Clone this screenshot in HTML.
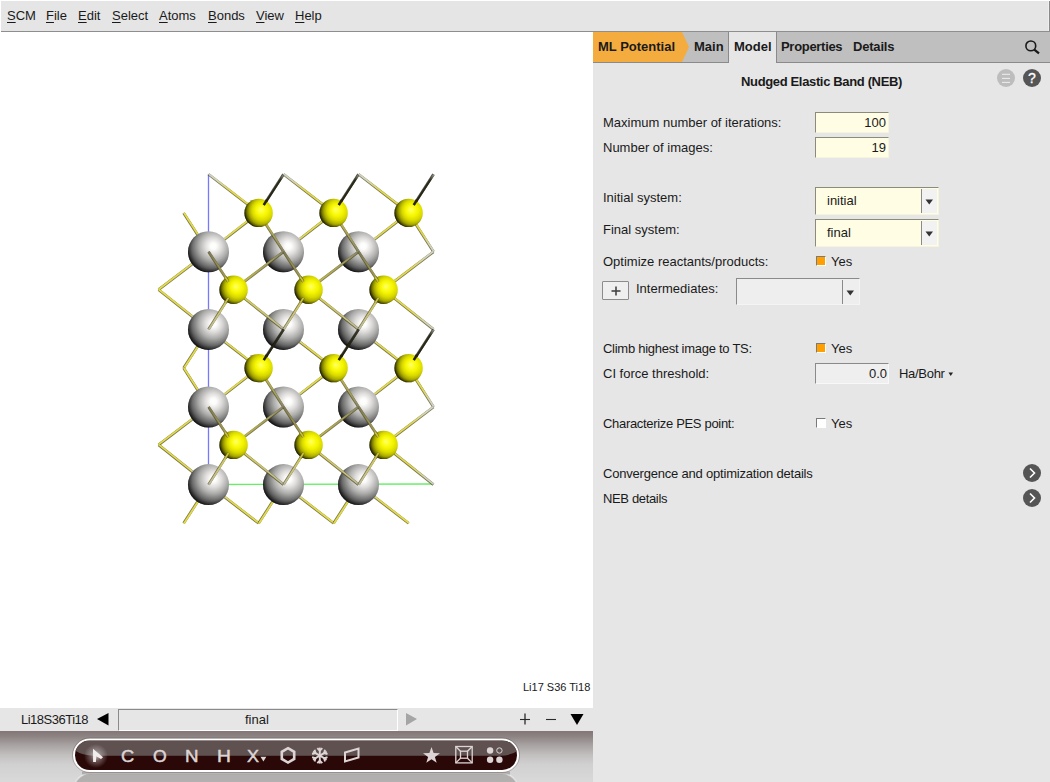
<!DOCTYPE html>
<html><head><meta charset="utf-8">
<style>
*{box-sizing:border-box}
html,body{margin:0;padding:0;width:1050px;height:782px;overflow:hidden;background:#fff;font-family:"Liberation Sans",sans-serif;color:#1a1a1a}
.a{position:absolute}
.t{position:absolute;font-size:13px;line-height:15px;white-space:nowrap}
.b{font-weight:bold}
.u{text-decoration:underline;text-underline-offset:2px}
#menu{left:1px;top:1px;width:1049px;height:31px;background:#e5e5e5;border-bottom:1px solid #8e8e8e;border-right:1px solid #8a8a8a;box-shadow:inset -1px 0 0 #efefef}
#view{left:0;top:32px;width:593px;height:676px;background:#fff}
#panel{left:593px;top:32px;width:457px;height:750px;background:#e6e6e6}
#tabbar{left:593px;top:32px;width:457px;height:31px;background:#bfbfbf;border-bottom:1px solid #8a8a8a}
.fld{position:absolute;background:#fffde4;border-top:1px solid #8b8b7a;border-left:1px solid #8b8b7a;border-right:1px solid #f6f4dc;border-bottom:1px solid #f6f4dc}
.cb{position:absolute;width:10px;height:10px;border-top:1px solid #7a7a7a;border-left:1px solid #7a7a7a;border-right:1px solid #fff;border-bottom:1px solid #fff}
</style></head><body>
<div id="menu" class="a"></div>
<div class="t" style="left:7px;top:8px"><span class="u">S</span>CM</div>
<div class="t" style="left:46px;top:8px"><span class="u">F</span>ile</div>
<div class="t" style="left:78px;top:8px"><span class="u">E</span>dit</div>
<div class="t" style="left:112px;top:8px"><span class="u">S</span>elect</div>
<div class="t" style="left:159px;top:8px"><span class="u">A</span>toms</div>
<div class="t" style="left:208px;top:8px"><span class="u">B</span>onds</div>
<div class="t" style="left:256px;top:8px"><span class="u">V</span>iew</div>
<div class="t" style="left:295px;top:8px"><span class="u">H</span>elp</div>

<div id="view" class="a"></div>
<!--MOL--><svg class="a" style="left:0;top:32px" width="593" height="676" viewBox="0 32 593 676">
<defs>
<radialGradient id="gti" cx="0.619" cy="0.364" r="0.657">
<stop offset="0" stop-color="#ffffff"/><stop offset="0.115" stop-color="#fcfcfa"/><stop offset="0.31" stop-color="#dedcda"/><stop offset="0.54" stop-color="#adadab"/><stop offset="0.77" stop-color="#707070"/><stop offset="0.95" stop-color="#383838"/><stop offset="1" stop-color="#2a2a2a"/>
</radialGradient>
<radialGradient id="gs" cx="0.7" cy="0.44" r="0.75" fx="0.57" fy="0.384">
<stop offset="0" stop-color="#ffff78"/><stop offset="0.12" stop-color="#ffff2c"/><stop offset="0.3" stop-color="#f4f400"/><stop offset="0.48" stop-color="#d8d800"/><stop offset="0.64" stop-color="#acac00"/><stop offset="0.8" stop-color="#6a6a00"/><stop offset="0.92" stop-color="#363600"/><stop offset="1" stop-color="#222200"/>
</radialGradient>
<radialGradient id="rim" cx="0.55" cy="0.45" r="0.57">
<stop offset="0" stop-color="#000" stop-opacity="0"/><stop offset="0.8" stop-color="#000" stop-opacity="0"/><stop offset="0.91" stop-color="#000" stop-opacity="0.18"/><stop offset="1" stop-color="#000" stop-opacity="0.6"/>
</radialGradient>
</defs>
<defs><linearGradient id="b1" gradientUnits="userSpaceOnUse" x1="258.6" y1="212.9" x2="208.5" y2="174.2"><stop offset="0" stop-color="#e4dc44"/><stop offset="0.55" stop-color="#e0d848"/><stop offset="0.85" stop-color="#d4d4bc"/><stop offset="1" stop-color="#d0d0c8"/></linearGradient><linearGradient id="b2" gradientUnits="userSpaceOnUse" x1="258.6" y1="212.9" x2="283.5" y2="174.2"><stop offset="0" stop-color="#24220e"/><stop offset="0.85" stop-color="#2a2a18"/><stop offset="1" stop-color="#9a9a90"/></linearGradient><linearGradient id="b3" gradientUnits="userSpaceOnUse" x1="258.6" y1="212.9" x2="208.5" y2="251.8"><stop offset="0" stop-color="#e4dc44"/><stop offset="0.55" stop-color="#e0d848"/><stop offset="0.85" stop-color="#d4d4bc"/><stop offset="1" stop-color="#d0d0c8"/></linearGradient><linearGradient id="b4" gradientUnits="userSpaceOnUse" x1="333.6" y1="212.9" x2="283.5" y2="174.2"><stop offset="0" stop-color="#e4dc44"/><stop offset="0.55" stop-color="#e0d848"/><stop offset="0.85" stop-color="#d4d4bc"/><stop offset="1" stop-color="#d0d0c8"/></linearGradient><linearGradient id="b5" gradientUnits="userSpaceOnUse" x1="333.6" y1="212.9" x2="358.5" y2="174.2"><stop offset="0" stop-color="#24220e"/><stop offset="0.85" stop-color="#2a2a18"/><stop offset="1" stop-color="#9a9a90"/></linearGradient><linearGradient id="b6" gradientUnits="userSpaceOnUse" x1="333.6" y1="212.9" x2="283.5" y2="251.8"><stop offset="0" stop-color="#e4dc44"/><stop offset="0.55" stop-color="#e0d848"/><stop offset="0.85" stop-color="#d4d4bc"/><stop offset="1" stop-color="#d0d0c8"/></linearGradient><linearGradient id="b7" gradientUnits="userSpaceOnUse" x1="408.6" y1="212.9" x2="358.5" y2="174.2"><stop offset="0" stop-color="#e4dc44"/><stop offset="0.55" stop-color="#e0d848"/><stop offset="0.85" stop-color="#d4d4bc"/><stop offset="1" stop-color="#d0d0c8"/></linearGradient><linearGradient id="b8" gradientUnits="userSpaceOnUse" x1="408.6" y1="212.9" x2="433.5" y2="174.2"><stop offset="0" stop-color="#24220e"/><stop offset="0.85" stop-color="#2a2a18"/><stop offset="1" stop-color="#9a9a90"/></linearGradient><linearGradient id="b9" gradientUnits="userSpaceOnUse" x1="408.6" y1="212.9" x2="358.5" y2="251.8"><stop offset="0" stop-color="#e4dc44"/><stop offset="0.55" stop-color="#e0d848"/><stop offset="0.85" stop-color="#d4d4bc"/><stop offset="1" stop-color="#d0d0c8"/></linearGradient><linearGradient id="b10" gradientUnits="userSpaceOnUse" x1="408.6" y1="212.9" x2="433.5" y2="251.8"><stop offset="0" stop-color="#e4dc44"/><stop offset="0.55" stop-color="#e0d848"/><stop offset="0.85" stop-color="#d4d4bc"/><stop offset="1" stop-color="#d0d0c8"/></linearGradient><linearGradient id="b11" gradientUnits="userSpaceOnUse" x1="383.6" y1="289.7" x2="433.5" y2="251.8"><stop offset="0" stop-color="#e4dc44"/><stop offset="0.55" stop-color="#e0d848"/><stop offset="0.85" stop-color="#d4d4bc"/><stop offset="1" stop-color="#d0d0c8"/></linearGradient><linearGradient id="b12" gradientUnits="userSpaceOnUse" x1="383.6" y1="289.7" x2="433.5" y2="329.4"><stop offset="0" stop-color="#e4dc44"/><stop offset="0.55" stop-color="#e0d848"/><stop offset="0.85" stop-color="#d4d4bc"/><stop offset="1" stop-color="#d0d0c8"/></linearGradient><linearGradient id="b13" gradientUnits="userSpaceOnUse" x1="258.6" y1="368.1" x2="208.5" y2="329.4"><stop offset="0" stop-color="#e4dc44"/><stop offset="0.55" stop-color="#e0d848"/><stop offset="0.85" stop-color="#d4d4bc"/><stop offset="1" stop-color="#d0d0c8"/></linearGradient><linearGradient id="b14" gradientUnits="userSpaceOnUse" x1="258.6" y1="368.1" x2="208.5" y2="407.0"><stop offset="0" stop-color="#e4dc44"/><stop offset="0.55" stop-color="#e0d848"/><stop offset="0.85" stop-color="#d4d4bc"/><stop offset="1" stop-color="#d0d0c8"/></linearGradient><linearGradient id="b15" gradientUnits="userSpaceOnUse" x1="333.6" y1="368.1" x2="283.5" y2="329.4"><stop offset="0" stop-color="#e4dc44"/><stop offset="0.55" stop-color="#e0d848"/><stop offset="0.85" stop-color="#d4d4bc"/><stop offset="1" stop-color="#d0d0c8"/></linearGradient><linearGradient id="b16" gradientUnits="userSpaceOnUse" x1="333.6" y1="368.1" x2="283.5" y2="407.0"><stop offset="0" stop-color="#e4dc44"/><stop offset="0.55" stop-color="#e0d848"/><stop offset="0.85" stop-color="#d4d4bc"/><stop offset="1" stop-color="#d0d0c8"/></linearGradient><linearGradient id="b17" gradientUnits="userSpaceOnUse" x1="408.6" y1="368.1" x2="358.5" y2="329.4"><stop offset="0" stop-color="#e4dc44"/><stop offset="0.55" stop-color="#e0d848"/><stop offset="0.85" stop-color="#d4d4bc"/><stop offset="1" stop-color="#d0d0c8"/></linearGradient><linearGradient id="b18" gradientUnits="userSpaceOnUse" x1="408.6" y1="368.1" x2="433.5" y2="329.4"><stop offset="0" stop-color="#24220e"/><stop offset="0.85" stop-color="#2a2a18"/><stop offset="1" stop-color="#9a9a90"/></linearGradient><linearGradient id="b19" gradientUnits="userSpaceOnUse" x1="408.6" y1="368.1" x2="358.5" y2="407.0"><stop offset="0" stop-color="#e4dc44"/><stop offset="0.55" stop-color="#e0d848"/><stop offset="0.85" stop-color="#d4d4bc"/><stop offset="1" stop-color="#d0d0c8"/></linearGradient><linearGradient id="b20" gradientUnits="userSpaceOnUse" x1="408.6" y1="368.1" x2="433.5" y2="407.0"><stop offset="0" stop-color="#e4dc44"/><stop offset="0.55" stop-color="#e0d848"/><stop offset="0.85" stop-color="#d4d4bc"/><stop offset="1" stop-color="#d0d0c8"/></linearGradient><linearGradient id="b21" gradientUnits="userSpaceOnUse" x1="383.6" y1="444.9" x2="433.5" y2="407.0"><stop offset="0" stop-color="#e4dc44"/><stop offset="0.55" stop-color="#e0d848"/><stop offset="0.85" stop-color="#d4d4bc"/><stop offset="1" stop-color="#d0d0c8"/></linearGradient><linearGradient id="b22" gradientUnits="userSpaceOnUse" x1="383.6" y1="444.9" x2="433.5" y2="484.6"><stop offset="0" stop-color="#e4dc44"/><stop offset="0.55" stop-color="#e0d848"/><stop offset="0.85" stop-color="#d4d4bc"/><stop offset="1" stop-color="#d0d0c8"/></linearGradient><linearGradient id="b23" gradientUnits="userSpaceOnUse" x1="183.6" y1="212.9" x2="208.5" y2="251.8"><stop offset="0" stop-color="#e4dc44"/><stop offset="0.55" stop-color="#e0d848"/><stop offset="0.85" stop-color="#d4d4bc"/><stop offset="1" stop-color="#d0d0c8"/></linearGradient><linearGradient id="b24" gradientUnits="userSpaceOnUse" x1="183.6" y1="368.1" x2="208.5" y2="329.4"><stop offset="0" stop-color="#e4dc44"/><stop offset="0.55" stop-color="#e0d848"/><stop offset="0.85" stop-color="#d4d4bc"/><stop offset="1" stop-color="#d0d0c8"/></linearGradient><linearGradient id="b25" gradientUnits="userSpaceOnUse" x1="183.6" y1="368.1" x2="208.5" y2="407.0"><stop offset="0" stop-color="#e4dc44"/><stop offset="0.55" stop-color="#e0d848"/><stop offset="0.85" stop-color="#d4d4bc"/><stop offset="1" stop-color="#d0d0c8"/></linearGradient><linearGradient id="b26" gradientUnits="userSpaceOnUse" x1="183.6" y1="523.3" x2="208.5" y2="484.6"><stop offset="0" stop-color="#e4dc44"/><stop offset="0.55" stop-color="#e0d848"/><stop offset="0.85" stop-color="#d4d4bc"/><stop offset="1" stop-color="#d0d0c8"/></linearGradient><linearGradient id="b27" gradientUnits="userSpaceOnUse" x1="258.6" y1="523.3" x2="208.5" y2="484.6"><stop offset="0" stop-color="#e4dc44"/><stop offset="0.55" stop-color="#e0d848"/><stop offset="0.85" stop-color="#d4d4bc"/><stop offset="1" stop-color="#d0d0c8"/></linearGradient><linearGradient id="b28" gradientUnits="userSpaceOnUse" x1="258.6" y1="523.3" x2="283.5" y2="484.6"><stop offset="0" stop-color="#e4dc44"/><stop offset="0.55" stop-color="#e0d848"/><stop offset="0.85" stop-color="#d4d4bc"/><stop offset="1" stop-color="#d0d0c8"/></linearGradient><linearGradient id="b29" gradientUnits="userSpaceOnUse" x1="333.6" y1="523.3" x2="283.5" y2="484.6"><stop offset="0" stop-color="#e4dc44"/><stop offset="0.55" stop-color="#e0d848"/><stop offset="0.85" stop-color="#d4d4bc"/><stop offset="1" stop-color="#d0d0c8"/></linearGradient><linearGradient id="b30" gradientUnits="userSpaceOnUse" x1="333.6" y1="523.3" x2="358.5" y2="484.6"><stop offset="0" stop-color="#e4dc44"/><stop offset="0.55" stop-color="#e0d848"/><stop offset="0.85" stop-color="#d4d4bc"/><stop offset="1" stop-color="#d0d0c8"/></linearGradient><linearGradient id="b31" gradientUnits="userSpaceOnUse" x1="408.6" y1="523.3" x2="358.5" y2="484.6"><stop offset="0" stop-color="#e4dc44"/><stop offset="0.55" stop-color="#e0d848"/><stop offset="0.85" stop-color="#d4d4bc"/><stop offset="1" stop-color="#d0d0c8"/></linearGradient><linearGradient id="b32" gradientUnits="userSpaceOnUse" x1="158.6" y1="289.7" x2="208.5" y2="251.8"><stop offset="0" stop-color="#e4dc44"/><stop offset="0.55" stop-color="#e0d848"/><stop offset="0.85" stop-color="#d4d4bc"/><stop offset="1" stop-color="#d0d0c8"/></linearGradient><linearGradient id="b33" gradientUnits="userSpaceOnUse" x1="158.6" y1="289.7" x2="208.5" y2="329.4"><stop offset="0" stop-color="#e4dc44"/><stop offset="0.55" stop-color="#e0d848"/><stop offset="0.85" stop-color="#d4d4bc"/><stop offset="1" stop-color="#d0d0c8"/></linearGradient><linearGradient id="b34" gradientUnits="userSpaceOnUse" x1="158.6" y1="444.9" x2="208.5" y2="407.0"><stop offset="0" stop-color="#e4dc44"/><stop offset="0.55" stop-color="#e0d848"/><stop offset="0.85" stop-color="#d4d4bc"/><stop offset="1" stop-color="#d0d0c8"/></linearGradient><linearGradient id="b35" gradientUnits="userSpaceOnUse" x1="158.6" y1="444.9" x2="208.5" y2="484.6"><stop offset="0" stop-color="#e4dc44"/><stop offset="0.55" stop-color="#e0d848"/><stop offset="0.85" stop-color="#d4d4bc"/><stop offset="1" stop-color="#d0d0c8"/></linearGradient><linearGradient id="b36" gradientUnits="userSpaceOnUse" x1="258.6" y1="212.9" x2="283.5" y2="251.8"><stop offset="0" stop-color="#c8c040"/><stop offset="0.4" stop-color="#b4ac50"/><stop offset="1" stop-color="#8a8870"/></linearGradient><linearGradient id="b37" gradientUnits="userSpaceOnUse" x1="233.6" y1="289.7" x2="208.5" y2="251.8"><stop offset="0" stop-color="#b4ac40"/><stop offset="0.4" stop-color="#a09850"/><stop offset="1" stop-color="#7c7a5c"/></linearGradient><linearGradient id="b38" gradientUnits="userSpaceOnUse" x1="233.6" y1="289.7" x2="283.5" y2="251.8"><stop offset="0" stop-color="#c8c040"/><stop offset="0.4" stop-color="#b4ac50"/><stop offset="1" stop-color="#8a8870"/></linearGradient><linearGradient id="b39" gradientUnits="userSpaceOnUse" x1="233.6" y1="289.7" x2="208.5" y2="329.4"><stop offset="0" stop-color="#dcd444"/><stop offset="0.4" stop-color="#d0c860"/><stop offset="1" stop-color="#bcbaa0"/></linearGradient><linearGradient id="b40" gradientUnits="userSpaceOnUse" x1="233.6" y1="289.7" x2="283.5" y2="329.4"><stop offset="0" stop-color="#dcd444"/><stop offset="0.4" stop-color="#d0c860"/><stop offset="1" stop-color="#bcbaa0"/></linearGradient><linearGradient id="b41" gradientUnits="userSpaceOnUse" x1="333.6" y1="212.9" x2="358.5" y2="251.8"><stop offset="0" stop-color="#c8c040"/><stop offset="0.4" stop-color="#b4ac50"/><stop offset="1" stop-color="#8a8870"/></linearGradient><linearGradient id="b42" gradientUnits="userSpaceOnUse" x1="308.6" y1="289.7" x2="283.5" y2="251.8"><stop offset="0" stop-color="#b4ac40"/><stop offset="0.4" stop-color="#a09850"/><stop offset="1" stop-color="#7c7a5c"/></linearGradient><linearGradient id="b43" gradientUnits="userSpaceOnUse" x1="308.6" y1="289.7" x2="358.5" y2="251.8"><stop offset="0" stop-color="#c8c040"/><stop offset="0.4" stop-color="#b4ac50"/><stop offset="1" stop-color="#8a8870"/></linearGradient><linearGradient id="b44" gradientUnits="userSpaceOnUse" x1="308.6" y1="289.7" x2="283.5" y2="329.4"><stop offset="0" stop-color="#dcd444"/><stop offset="0.4" stop-color="#d0c860"/><stop offset="1" stop-color="#bcbaa0"/></linearGradient><linearGradient id="b45" gradientUnits="userSpaceOnUse" x1="308.6" y1="289.7" x2="358.5" y2="329.4"><stop offset="0" stop-color="#dcd444"/><stop offset="0.4" stop-color="#d0c860"/><stop offset="1" stop-color="#bcbaa0"/></linearGradient><linearGradient id="b46" gradientUnits="userSpaceOnUse" x1="383.6" y1="289.7" x2="358.5" y2="251.8"><stop offset="0" stop-color="#b4ac40"/><stop offset="0.4" stop-color="#a09850"/><stop offset="1" stop-color="#7c7a5c"/></linearGradient><linearGradient id="b47" gradientUnits="userSpaceOnUse" x1="383.6" y1="289.7" x2="358.5" y2="329.4"><stop offset="0" stop-color="#dcd444"/><stop offset="0.4" stop-color="#d0c860"/><stop offset="1" stop-color="#bcbaa0"/></linearGradient><linearGradient id="b48" gradientUnits="userSpaceOnUse" x1="258.6" y1="368.1" x2="283.5" y2="329.4"><stop offset="0" stop-color="#24220e"/><stop offset="0.7" stop-color="#262412"/><stop offset="1" stop-color="#3a3a30"/></linearGradient><linearGradient id="b49" gradientUnits="userSpaceOnUse" x1="258.6" y1="368.1" x2="283.5" y2="407.0"><stop offset="0" stop-color="#c8c040"/><stop offset="0.4" stop-color="#b4ac50"/><stop offset="1" stop-color="#8a8870"/></linearGradient><linearGradient id="b50" gradientUnits="userSpaceOnUse" x1="233.6" y1="444.9" x2="208.5" y2="407.0"><stop offset="0" stop-color="#b4ac40"/><stop offset="0.4" stop-color="#a09850"/><stop offset="1" stop-color="#7c7a5c"/></linearGradient><linearGradient id="b51" gradientUnits="userSpaceOnUse" x1="233.6" y1="444.9" x2="283.5" y2="407.0"><stop offset="0" stop-color="#c8c040"/><stop offset="0.4" stop-color="#b4ac50"/><stop offset="1" stop-color="#8a8870"/></linearGradient><linearGradient id="b52" gradientUnits="userSpaceOnUse" x1="233.6" y1="444.9" x2="208.5" y2="484.6"><stop offset="0" stop-color="#dcd444"/><stop offset="0.4" stop-color="#d0c860"/><stop offset="1" stop-color="#bcbaa0"/></linearGradient><linearGradient id="b53" gradientUnits="userSpaceOnUse" x1="233.6" y1="444.9" x2="283.5" y2="484.6"><stop offset="0" stop-color="#dcd444"/><stop offset="0.4" stop-color="#d0c860"/><stop offset="1" stop-color="#bcbaa0"/></linearGradient><linearGradient id="b54" gradientUnits="userSpaceOnUse" x1="333.6" y1="368.1" x2="358.5" y2="329.4"><stop offset="0" stop-color="#24220e"/><stop offset="0.7" stop-color="#262412"/><stop offset="1" stop-color="#3a3a30"/></linearGradient><linearGradient id="b55" gradientUnits="userSpaceOnUse" x1="333.6" y1="368.1" x2="358.5" y2="407.0"><stop offset="0" stop-color="#c8c040"/><stop offset="0.4" stop-color="#b4ac50"/><stop offset="1" stop-color="#8a8870"/></linearGradient><linearGradient id="b56" gradientUnits="userSpaceOnUse" x1="308.6" y1="444.9" x2="283.5" y2="407.0"><stop offset="0" stop-color="#b4ac40"/><stop offset="0.4" stop-color="#a09850"/><stop offset="1" stop-color="#7c7a5c"/></linearGradient><linearGradient id="b57" gradientUnits="userSpaceOnUse" x1="308.6" y1="444.9" x2="358.5" y2="407.0"><stop offset="0" stop-color="#c8c040"/><stop offset="0.4" stop-color="#b4ac50"/><stop offset="1" stop-color="#8a8870"/></linearGradient><linearGradient id="b58" gradientUnits="userSpaceOnUse" x1="308.6" y1="444.9" x2="283.5" y2="484.6"><stop offset="0" stop-color="#dcd444"/><stop offset="0.4" stop-color="#d0c860"/><stop offset="1" stop-color="#bcbaa0"/></linearGradient><linearGradient id="b59" gradientUnits="userSpaceOnUse" x1="308.6" y1="444.9" x2="358.5" y2="484.6"><stop offset="0" stop-color="#dcd444"/><stop offset="0.4" stop-color="#d0c860"/><stop offset="1" stop-color="#bcbaa0"/></linearGradient><linearGradient id="b60" gradientUnits="userSpaceOnUse" x1="383.6" y1="444.9" x2="358.5" y2="407.0"><stop offset="0" stop-color="#b4ac40"/><stop offset="0.4" stop-color="#a09850"/><stop offset="1" stop-color="#7c7a5c"/></linearGradient><linearGradient id="b61" gradientUnits="userSpaceOnUse" x1="383.6" y1="444.9" x2="358.5" y2="484.6"><stop offset="0" stop-color="#dcd444"/><stop offset="0.4" stop-color="#d0c860"/><stop offset="1" stop-color="#bcbaa0"/></linearGradient></defs>
<line x1="208.5" y1="174" x2="208.5" y2="484" stroke="#7878ff" stroke-width="1.3"/>
<line x1="208.5" y1="484.5" x2="433.5" y2="484" stroke="#66ee66" stroke-width="1.3"/>
<line x1="258.6" y1="212.9" x2="208.5" y2="174.2" stroke="#4a4610" stroke-opacity="0.75" stroke-width="2.7"/><line x1="258.81" y1="212.62" x2="208.71" y2="173.92" stroke="url(#b1)" stroke-width="1.8"/>
<line x1="258.6" y1="212.9" x2="283.5" y2="174.2" stroke="#101008" stroke-opacity="0.75" stroke-width="2.7"/><line x1="258.89" y1="213.09" x2="283.79" y2="174.39" stroke="url(#b2)" stroke-width="1.8"/>
<line x1="258.6" y1="212.9" x2="208.5" y2="251.8" stroke="#4a4610" stroke-opacity="0.75" stroke-width="2.7"/><line x1="258.39" y1="212.62" x2="208.29" y2="251.52" stroke="url(#b3)" stroke-width="1.8"/>
<line x1="333.6" y1="212.9" x2="283.5" y2="174.2" stroke="#4a4610" stroke-opacity="0.75" stroke-width="2.7"/><line x1="333.81" y1="212.62" x2="283.71" y2="173.92" stroke="url(#b4)" stroke-width="1.8"/>
<line x1="333.6" y1="212.9" x2="358.5" y2="174.2" stroke="#101008" stroke-opacity="0.75" stroke-width="2.7"/><line x1="333.89" y1="213.09" x2="358.79" y2="174.39" stroke="url(#b5)" stroke-width="1.8"/>
<line x1="333.6" y1="212.9" x2="283.5" y2="251.8" stroke="#4a4610" stroke-opacity="0.75" stroke-width="2.7"/><line x1="333.39" y1="212.62" x2="283.29" y2="251.52" stroke="url(#b6)" stroke-width="1.8"/>
<line x1="408.6" y1="212.9" x2="358.5" y2="174.2" stroke="#4a4610" stroke-opacity="0.75" stroke-width="2.7"/><line x1="408.81" y1="212.62" x2="358.71" y2="173.92" stroke="url(#b7)" stroke-width="1.8"/>
<line x1="408.6" y1="212.9" x2="433.5" y2="174.2" stroke="#101008" stroke-opacity="0.75" stroke-width="2.7"/><line x1="408.89" y1="213.09" x2="433.79" y2="174.39" stroke="url(#b8)" stroke-width="1.8"/>
<line x1="408.6" y1="212.9" x2="358.5" y2="251.8" stroke="#4a4610" stroke-opacity="0.75" stroke-width="2.7"/><line x1="408.39" y1="212.62" x2="358.29" y2="251.52" stroke="url(#b9)" stroke-width="1.8"/>
<line x1="408.6" y1="212.9" x2="433.5" y2="251.8" stroke="#4a4610" stroke-opacity="0.75" stroke-width="2.7"/><line x1="408.89" y1="212.71" x2="433.79" y2="251.61" stroke="url(#b10)" stroke-width="1.8"/>
<line x1="383.6" y1="289.7" x2="433.5" y2="251.8" stroke="#4a4610" stroke-opacity="0.75" stroke-width="2.7"/><line x1="383.39" y1="289.42" x2="433.29" y2="251.52" stroke="url(#b11)" stroke-width="1.8"/>
<line x1="383.6" y1="289.7" x2="433.5" y2="329.4" stroke="#4a4610" stroke-opacity="0.75" stroke-width="2.7"/><line x1="383.82" y1="289.43" x2="433.72" y2="329.13" stroke="url(#b12)" stroke-width="1.8"/>
<line x1="258.6" y1="368.1" x2="208.5" y2="329.4" stroke="#4a4610" stroke-opacity="0.75" stroke-width="2.7"/><line x1="258.81" y1="367.82" x2="208.71" y2="329.12" stroke="url(#b13)" stroke-width="1.8"/>
<line x1="258.6" y1="368.1" x2="208.5" y2="407.0" stroke="#4a4610" stroke-opacity="0.75" stroke-width="2.7"/><line x1="258.39" y1="367.82" x2="208.29" y2="406.72" stroke="url(#b14)" stroke-width="1.8"/>
<line x1="333.6" y1="368.1" x2="283.5" y2="329.4" stroke="#4a4610" stroke-opacity="0.75" stroke-width="2.7"/><line x1="333.81" y1="367.82" x2="283.71" y2="329.12" stroke="url(#b15)" stroke-width="1.8"/>
<line x1="333.6" y1="368.1" x2="283.5" y2="407.0" stroke="#4a4610" stroke-opacity="0.75" stroke-width="2.7"/><line x1="333.39" y1="367.82" x2="283.29" y2="406.72" stroke="url(#b16)" stroke-width="1.8"/>
<line x1="408.6" y1="368.1" x2="358.5" y2="329.4" stroke="#4a4610" stroke-opacity="0.75" stroke-width="2.7"/><line x1="408.81" y1="367.82" x2="358.71" y2="329.12" stroke="url(#b17)" stroke-width="1.8"/>
<line x1="408.6" y1="368.1" x2="433.5" y2="329.4" stroke="#101008" stroke-opacity="0.75" stroke-width="2.7"/><line x1="408.89" y1="368.29" x2="433.79" y2="329.59" stroke="url(#b18)" stroke-width="1.8"/>
<line x1="408.6" y1="368.1" x2="358.5" y2="407.0" stroke="#4a4610" stroke-opacity="0.75" stroke-width="2.7"/><line x1="408.39" y1="367.82" x2="358.29" y2="406.72" stroke="url(#b19)" stroke-width="1.8"/>
<line x1="408.6" y1="368.1" x2="433.5" y2="407.0" stroke="#4a4610" stroke-opacity="0.75" stroke-width="2.7"/><line x1="408.89" y1="367.91" x2="433.79" y2="406.81" stroke="url(#b20)" stroke-width="1.8"/>
<line x1="383.6" y1="444.9" x2="433.5" y2="407.0" stroke="#4a4610" stroke-opacity="0.75" stroke-width="2.7"/><line x1="383.39" y1="444.62" x2="433.29" y2="406.72" stroke="url(#b21)" stroke-width="1.8"/>
<line x1="383.6" y1="444.9" x2="433.5" y2="484.6" stroke="#4a4610" stroke-opacity="0.75" stroke-width="2.7"/><line x1="383.82" y1="444.63" x2="433.72" y2="484.33" stroke="url(#b22)" stroke-width="1.8"/>
<line x1="183.6" y1="212.9" x2="208.5" y2="251.8" stroke="#4a4610" stroke-opacity="0.75" stroke-width="2.7"/><line x1="183.89" y1="212.71" x2="208.79" y2="251.61" stroke="url(#b23)" stroke-width="1.8"/>
<line x1="183.6" y1="368.1" x2="208.5" y2="329.4" stroke="#4a4610" stroke-opacity="0.75" stroke-width="2.7"/><line x1="183.89" y1="368.29" x2="208.79" y2="329.59" stroke="url(#b24)" stroke-width="1.8"/>
<line x1="183.6" y1="368.1" x2="208.5" y2="407.0" stroke="#4a4610" stroke-opacity="0.75" stroke-width="2.7"/><line x1="183.89" y1="367.91" x2="208.79" y2="406.81" stroke="url(#b25)" stroke-width="1.8"/>
<line x1="183.6" y1="523.3" x2="208.5" y2="484.6" stroke="#4a4610" stroke-opacity="0.75" stroke-width="2.7"/><line x1="183.89" y1="523.49" x2="208.79" y2="484.79" stroke="url(#b26)" stroke-width="1.8"/>
<line x1="258.6" y1="523.3" x2="208.5" y2="484.6" stroke="#4a4610" stroke-opacity="0.75" stroke-width="2.7"/><line x1="258.81" y1="523.02" x2="208.71" y2="484.32" stroke="url(#b27)" stroke-width="1.8"/>
<line x1="258.6" y1="523.3" x2="283.5" y2="484.6" stroke="#4a4610" stroke-opacity="0.75" stroke-width="2.7"/><line x1="258.89" y1="523.49" x2="283.79" y2="484.79" stroke="url(#b28)" stroke-width="1.8"/>
<line x1="333.6" y1="523.3" x2="283.5" y2="484.6" stroke="#4a4610" stroke-opacity="0.75" stroke-width="2.7"/><line x1="333.81" y1="523.02" x2="283.71" y2="484.32" stroke="url(#b29)" stroke-width="1.8"/>
<line x1="333.6" y1="523.3" x2="358.5" y2="484.6" stroke="#4a4610" stroke-opacity="0.75" stroke-width="2.7"/><line x1="333.89" y1="523.49" x2="358.79" y2="484.79" stroke="url(#b30)" stroke-width="1.8"/>
<line x1="408.6" y1="523.3" x2="358.5" y2="484.6" stroke="#4a4610" stroke-opacity="0.75" stroke-width="2.7"/><line x1="408.81" y1="523.02" x2="358.71" y2="484.32" stroke="url(#b31)" stroke-width="1.8"/>
<line x1="158.6" y1="289.7" x2="208.5" y2="251.8" stroke="#4a4610" stroke-opacity="0.75" stroke-width="2.7"/><line x1="158.39" y1="289.42" x2="208.29" y2="251.52" stroke="url(#b32)" stroke-width="1.8"/>
<line x1="158.6" y1="289.7" x2="208.5" y2="329.4" stroke="#4a4610" stroke-opacity="0.75" stroke-width="2.7"/><line x1="158.82" y1="289.43" x2="208.72" y2="329.13" stroke="url(#b33)" stroke-width="1.8"/>
<line x1="158.6" y1="444.9" x2="208.5" y2="407.0" stroke="#4a4610" stroke-opacity="0.75" stroke-width="2.7"/><line x1="158.39" y1="444.62" x2="208.29" y2="406.72" stroke="url(#b34)" stroke-width="1.8"/>
<line x1="158.6" y1="444.9" x2="208.5" y2="484.6" stroke="#4a4610" stroke-opacity="0.75" stroke-width="2.7"/><line x1="158.82" y1="444.63" x2="208.72" y2="484.33" stroke="url(#b35)" stroke-width="1.8"/>
<circle cx="208.5" cy="251.79999999999998" r="20.5" fill="url(#gti)"/><circle cx="208.5" cy="251.79999999999998" r="20.5" fill="url(#rim)"/>
<circle cx="208.5" cy="329.4" r="20.5" fill="url(#gti)"/><circle cx="208.5" cy="329.4" r="20.5" fill="url(#rim)"/>
<circle cx="208.5" cy="407.0" r="20.5" fill="url(#gti)"/><circle cx="208.5" cy="407.0" r="20.5" fill="url(#rim)"/>
<circle cx="208.5" cy="484.59999999999997" r="20.5" fill="url(#gti)"/><circle cx="208.5" cy="484.59999999999997" r="20.5" fill="url(#rim)"/>
<circle cx="283.5" cy="251.79999999999998" r="20.5" fill="url(#gti)"/><circle cx="283.5" cy="251.79999999999998" r="20.5" fill="url(#rim)"/>
<circle cx="283.5" cy="329.4" r="20.5" fill="url(#gti)"/><circle cx="283.5" cy="329.4" r="20.5" fill="url(#rim)"/>
<circle cx="283.5" cy="407.0" r="20.5" fill="url(#gti)"/><circle cx="283.5" cy="407.0" r="20.5" fill="url(#rim)"/>
<circle cx="283.5" cy="484.59999999999997" r="20.5" fill="url(#gti)"/><circle cx="283.5" cy="484.59999999999997" r="20.5" fill="url(#rim)"/>
<circle cx="358.5" cy="251.79999999999998" r="20.5" fill="url(#gti)"/><circle cx="358.5" cy="251.79999999999998" r="20.5" fill="url(#rim)"/>
<circle cx="358.5" cy="329.4" r="20.5" fill="url(#gti)"/><circle cx="358.5" cy="329.4" r="20.5" fill="url(#rim)"/>
<circle cx="358.5" cy="407.0" r="20.5" fill="url(#gti)"/><circle cx="358.5" cy="407.0" r="20.5" fill="url(#rim)"/>
<circle cx="358.5" cy="484.59999999999997" r="20.5" fill="url(#gti)"/><circle cx="358.5" cy="484.59999999999997" r="20.5" fill="url(#rim)"/>
<line x1="258.6" y1="212.9" x2="283.5" y2="251.8" stroke="#4a4610" stroke-opacity="0.75" stroke-width="2.7"/><line x1="258.89" y1="212.71" x2="283.79" y2="251.61" stroke="url(#b36)" stroke-width="1.8"/>
<line x1="233.6" y1="289.7" x2="208.5" y2="251.8" stroke="#4a4610" stroke-opacity="0.75" stroke-width="2.7"/><line x1="233.89" y1="289.51" x2="208.79" y2="251.61" stroke="url(#b37)" stroke-width="1.8"/>
<line x1="233.6" y1="289.7" x2="283.5" y2="251.8" stroke="#4a4610" stroke-opacity="0.75" stroke-width="2.7"/><line x1="233.39" y1="289.42" x2="283.29" y2="251.52" stroke="url(#b38)" stroke-width="1.8"/>
<line x1="233.6" y1="289.7" x2="208.5" y2="329.4" stroke="#4a4610" stroke-opacity="0.75" stroke-width="2.7"/><line x1="233.90" y1="289.89" x2="208.80" y2="329.59" stroke="url(#b39)" stroke-width="1.8"/>
<line x1="233.6" y1="289.7" x2="283.5" y2="329.4" stroke="#4a4610" stroke-opacity="0.75" stroke-width="2.7"/><line x1="233.82" y1="289.43" x2="283.72" y2="329.13" stroke="url(#b40)" stroke-width="1.8"/>
<line x1="333.6" y1="212.9" x2="358.5" y2="251.8" stroke="#4a4610" stroke-opacity="0.75" stroke-width="2.7"/><line x1="333.89" y1="212.71" x2="358.79" y2="251.61" stroke="url(#b41)" stroke-width="1.8"/>
<line x1="308.6" y1="289.7" x2="283.5" y2="251.8" stroke="#4a4610" stroke-opacity="0.75" stroke-width="2.7"/><line x1="308.89" y1="289.51" x2="283.79" y2="251.61" stroke="url(#b42)" stroke-width="1.8"/>
<line x1="308.6" y1="289.7" x2="358.5" y2="251.8" stroke="#4a4610" stroke-opacity="0.75" stroke-width="2.7"/><line x1="308.39" y1="289.42" x2="358.29" y2="251.52" stroke="url(#b43)" stroke-width="1.8"/>
<line x1="308.6" y1="289.7" x2="283.5" y2="329.4" stroke="#4a4610" stroke-opacity="0.75" stroke-width="2.7"/><line x1="308.90" y1="289.89" x2="283.80" y2="329.59" stroke="url(#b44)" stroke-width="1.8"/>
<line x1="308.6" y1="289.7" x2="358.5" y2="329.4" stroke="#4a4610" stroke-opacity="0.75" stroke-width="2.7"/><line x1="308.82" y1="289.43" x2="358.72" y2="329.13" stroke="url(#b45)" stroke-width="1.8"/>
<line x1="383.6" y1="289.7" x2="358.5" y2="251.8" stroke="#4a4610" stroke-opacity="0.75" stroke-width="2.7"/><line x1="383.89" y1="289.51" x2="358.79" y2="251.61" stroke="url(#b46)" stroke-width="1.8"/>
<line x1="383.6" y1="289.7" x2="358.5" y2="329.4" stroke="#4a4610" stroke-opacity="0.75" stroke-width="2.7"/><line x1="383.90" y1="289.89" x2="358.80" y2="329.59" stroke="url(#b47)" stroke-width="1.8"/>
<line x1="258.6" y1="368.1" x2="283.5" y2="329.4" stroke="#101008" stroke-opacity="0.75" stroke-width="2.7"/><line x1="258.89" y1="368.29" x2="283.79" y2="329.59" stroke="url(#b48)" stroke-width="1.8"/>
<line x1="258.6" y1="368.1" x2="283.5" y2="407.0" stroke="#4a4610" stroke-opacity="0.75" stroke-width="2.7"/><line x1="258.89" y1="367.91" x2="283.79" y2="406.81" stroke="url(#b49)" stroke-width="1.8"/>
<line x1="233.6" y1="444.9" x2="208.5" y2="407.0" stroke="#4a4610" stroke-opacity="0.75" stroke-width="2.7"/><line x1="233.89" y1="444.71" x2="208.79" y2="406.81" stroke="url(#b50)" stroke-width="1.8"/>
<line x1="233.6" y1="444.9" x2="283.5" y2="407.0" stroke="#4a4610" stroke-opacity="0.75" stroke-width="2.7"/><line x1="233.39" y1="444.62" x2="283.29" y2="406.72" stroke="url(#b51)" stroke-width="1.8"/>
<line x1="233.6" y1="444.9" x2="208.5" y2="484.6" stroke="#4a4610" stroke-opacity="0.75" stroke-width="2.7"/><line x1="233.90" y1="445.09" x2="208.80" y2="484.79" stroke="url(#b52)" stroke-width="1.8"/>
<line x1="233.6" y1="444.9" x2="283.5" y2="484.6" stroke="#4a4610" stroke-opacity="0.75" stroke-width="2.7"/><line x1="233.82" y1="444.63" x2="283.72" y2="484.33" stroke="url(#b53)" stroke-width="1.8"/>
<line x1="333.6" y1="368.1" x2="358.5" y2="329.4" stroke="#101008" stroke-opacity="0.75" stroke-width="2.7"/><line x1="333.89" y1="368.29" x2="358.79" y2="329.59" stroke="url(#b54)" stroke-width="1.8"/>
<line x1="333.6" y1="368.1" x2="358.5" y2="407.0" stroke="#4a4610" stroke-opacity="0.75" stroke-width="2.7"/><line x1="333.89" y1="367.91" x2="358.79" y2="406.81" stroke="url(#b55)" stroke-width="1.8"/>
<line x1="308.6" y1="444.9" x2="283.5" y2="407.0" stroke="#4a4610" stroke-opacity="0.75" stroke-width="2.7"/><line x1="308.89" y1="444.71" x2="283.79" y2="406.81" stroke="url(#b56)" stroke-width="1.8"/>
<line x1="308.6" y1="444.9" x2="358.5" y2="407.0" stroke="#4a4610" stroke-opacity="0.75" stroke-width="2.7"/><line x1="308.39" y1="444.62" x2="358.29" y2="406.72" stroke="url(#b57)" stroke-width="1.8"/>
<line x1="308.6" y1="444.9" x2="283.5" y2="484.6" stroke="#4a4610" stroke-opacity="0.75" stroke-width="2.7"/><line x1="308.90" y1="445.09" x2="283.80" y2="484.79" stroke="url(#b58)" stroke-width="1.8"/>
<line x1="308.6" y1="444.9" x2="358.5" y2="484.6" stroke="#4a4610" stroke-opacity="0.75" stroke-width="2.7"/><line x1="308.82" y1="444.63" x2="358.72" y2="484.33" stroke="url(#b59)" stroke-width="1.8"/>
<line x1="383.6" y1="444.9" x2="358.5" y2="407.0" stroke="#4a4610" stroke-opacity="0.75" stroke-width="2.7"/><line x1="383.89" y1="444.71" x2="358.79" y2="406.81" stroke="url(#b60)" stroke-width="1.8"/>
<line x1="383.6" y1="444.9" x2="358.5" y2="484.6" stroke="#4a4610" stroke-opacity="0.75" stroke-width="2.7"/><line x1="383.90" y1="445.09" x2="358.80" y2="484.79" stroke="url(#b61)" stroke-width="1.8"/>
<circle cx="258.6" cy="212.9" r="14.2" fill="url(#gs)"/><circle cx="258.6" cy="212.9" r="14.2" fill="url(#rim)"/>
<circle cx="233.6" cy="289.7" r="14.2" fill="url(#gs)"/><circle cx="233.6" cy="289.7" r="14.2" fill="url(#rim)"/>
<circle cx="333.6" cy="212.9" r="14.2" fill="url(#gs)"/><circle cx="333.6" cy="212.9" r="14.2" fill="url(#rim)"/>
<circle cx="308.6" cy="289.7" r="14.2" fill="url(#gs)"/><circle cx="308.6" cy="289.7" r="14.2" fill="url(#rim)"/>
<circle cx="408.6" cy="212.9" r="14.2" fill="url(#gs)"/><circle cx="408.6" cy="212.9" r="14.2" fill="url(#rim)"/>
<circle cx="383.6" cy="289.7" r="14.2" fill="url(#gs)"/><circle cx="383.6" cy="289.7" r="14.2" fill="url(#rim)"/>
<circle cx="258.6" cy="368.1" r="14.2" fill="url(#gs)"/><circle cx="258.6" cy="368.1" r="14.2" fill="url(#rim)"/>
<circle cx="233.6" cy="444.9" r="14.2" fill="url(#gs)"/><circle cx="233.6" cy="444.9" r="14.2" fill="url(#rim)"/>
<circle cx="333.6" cy="368.1" r="14.2" fill="url(#gs)"/><circle cx="333.6" cy="368.1" r="14.2" fill="url(#rim)"/>
<circle cx="308.6" cy="444.9" r="14.2" fill="url(#gs)"/><circle cx="308.6" cy="444.9" r="14.2" fill="url(#rim)"/>
<circle cx="408.6" cy="368.1" r="14.2" fill="url(#gs)"/><circle cx="408.6" cy="368.1" r="14.2" fill="url(#rim)"/>
<circle cx="383.6" cy="444.9" r="14.2" fill="url(#gs)"/><circle cx="383.6" cy="444.9" r="14.2" fill="url(#rim)"/>
<line x1="263.74" y1="204.91" x2="266.99" y2="199.87" stroke="#101008" stroke-opacity="0.75" stroke-width="2.7"/>
<line x1="263.74" y1="204.91" x2="266.99" y2="199.87" stroke="#24220e" stroke-width="1.8"/>
<line x1="228.35" y1="281.78" x2="225.04" y2="276.78" stroke="#4a4610" stroke-opacity="0.75" stroke-width="2.7"/>
<line x1="228.35" y1="281.78" x2="225.04" y2="276.78" stroke="#c8c040" stroke-width="1.8"/>
<line x1="228.52" y1="297.73" x2="225.32" y2="302.80" stroke="#4a4610" stroke-opacity="0.75" stroke-width="2.7"/>
<line x1="228.52" y1="297.73" x2="225.32" y2="302.80" stroke="#c8c040" stroke-width="1.8"/>
<line x1="338.74" y1="204.91" x2="341.99" y2="199.87" stroke="#101008" stroke-opacity="0.75" stroke-width="2.7"/>
<line x1="338.74" y1="204.91" x2="341.99" y2="199.87" stroke="#24220e" stroke-width="1.8"/>
<line x1="303.35" y1="281.78" x2="300.04" y2="276.78" stroke="#4a4610" stroke-opacity="0.75" stroke-width="2.7"/>
<line x1="303.35" y1="281.78" x2="300.04" y2="276.78" stroke="#c8c040" stroke-width="1.8"/>
<line x1="303.52" y1="297.73" x2="300.32" y2="302.80" stroke="#4a4610" stroke-opacity="0.75" stroke-width="2.7"/>
<line x1="303.52" y1="297.73" x2="300.32" y2="302.80" stroke="#c8c040" stroke-width="1.8"/>
<line x1="413.74" y1="204.91" x2="416.99" y2="199.87" stroke="#101008" stroke-opacity="0.75" stroke-width="2.7"/>
<line x1="413.74" y1="204.91" x2="416.99" y2="199.87" stroke="#24220e" stroke-width="1.8"/>
<line x1="378.35" y1="281.78" x2="375.04" y2="276.78" stroke="#4a4610" stroke-opacity="0.75" stroke-width="2.7"/>
<line x1="378.35" y1="281.78" x2="375.04" y2="276.78" stroke="#c8c040" stroke-width="1.8"/>
<line x1="378.52" y1="297.73" x2="375.32" y2="302.80" stroke="#4a4610" stroke-opacity="0.75" stroke-width="2.7"/>
<line x1="378.52" y1="297.73" x2="375.32" y2="302.80" stroke="#c8c040" stroke-width="1.8"/>
<line x1="263.74" y1="360.11" x2="266.99" y2="355.07" stroke="#101008" stroke-opacity="0.75" stroke-width="2.7"/>
<line x1="263.74" y1="360.11" x2="266.99" y2="355.07" stroke="#24220e" stroke-width="1.8"/>
<line x1="228.35" y1="436.98" x2="225.04" y2="431.98" stroke="#4a4610" stroke-opacity="0.75" stroke-width="2.7"/>
<line x1="228.35" y1="436.98" x2="225.04" y2="431.98" stroke="#c8c040" stroke-width="1.8"/>
<line x1="228.52" y1="452.93" x2="225.32" y2="458.00" stroke="#4a4610" stroke-opacity="0.75" stroke-width="2.7"/>
<line x1="228.52" y1="452.93" x2="225.32" y2="458.00" stroke="#c8c040" stroke-width="1.8"/>
<line x1="338.74" y1="360.11" x2="341.99" y2="355.07" stroke="#101008" stroke-opacity="0.75" stroke-width="2.7"/>
<line x1="338.74" y1="360.11" x2="341.99" y2="355.07" stroke="#24220e" stroke-width="1.8"/>
<line x1="303.35" y1="436.98" x2="300.04" y2="431.98" stroke="#4a4610" stroke-opacity="0.75" stroke-width="2.7"/>
<line x1="303.35" y1="436.98" x2="300.04" y2="431.98" stroke="#c8c040" stroke-width="1.8"/>
<line x1="303.52" y1="452.93" x2="300.32" y2="458.00" stroke="#4a4610" stroke-opacity="0.75" stroke-width="2.7"/>
<line x1="303.52" y1="452.93" x2="300.32" y2="458.00" stroke="#c8c040" stroke-width="1.8"/>
<line x1="413.74" y1="360.11" x2="416.99" y2="355.07" stroke="#101008" stroke-opacity="0.75" stroke-width="2.7"/>
<line x1="413.74" y1="360.11" x2="416.99" y2="355.07" stroke="#24220e" stroke-width="1.8"/>
<line x1="378.35" y1="436.98" x2="375.04" y2="431.98" stroke="#4a4610" stroke-opacity="0.75" stroke-width="2.7"/>
<line x1="378.35" y1="436.98" x2="375.04" y2="431.98" stroke="#c8c040" stroke-width="1.8"/>
<line x1="378.52" y1="452.93" x2="375.32" y2="458.00" stroke="#4a4610" stroke-opacity="0.75" stroke-width="2.7"/>
<line x1="378.52" y1="452.93" x2="375.32" y2="458.00" stroke="#c8c040" stroke-width="1.8"/>
</svg><!--/MOL-->
<div id="panel" class="a"></div>
<div id="tabbar" class="a"></div>

<svg class="a" style="left:593px;top:32px" width="96" height="30"><polygon points="0,0 89,0 96,15 89,30 0,30" fill="#f4ac3e"/></svg>
<div class="a" style="left:728px;top:32px;width:49px;height:31px;background:#e6e6e6;border-left:1px solid #8a8a8a;border-right:1px solid #8a8a8a"></div>
<div class="t b" style="left:598px;top:39px">ML Potential</div>
<div class="t b" style="left:694px;top:39px">Main</div>
<div class="t b" style="left:734px;top:39px">Model</div>
<div class="t b" style="left:781px;top:39px;letter-spacing:-0.3px">Properties</div>
<div class="t b" style="left:853px;top:39px;letter-spacing:-0.2px">Details</div>
<svg class="a" style="left:1022px;top:38px" width="20" height="18"><circle cx="8.8" cy="7.9" r="4.9" fill="none" stroke="#1a1a1a" stroke-width="1.6"/><line x1="12.3" y1="11.6" x2="17" y2="15.3" stroke="#1a1a1a" stroke-width="2.3" stroke-linecap="butt"/></svg>
<div class="t b" style="left:741px;top:74px;letter-spacing:-0.35px">Nudged Elastic Band (NEB)</div>
<svg class="a" style="left:996px;top:68px" width="48" height="20">
 <circle cx="10" cy="10" r="9" fill="#bdbdbd"/>
 <line x1="6" y1="6.3" x2="14" y2="6.3" stroke="#eee" stroke-width="1"/>
 <line x1="6" y1="10.4" x2="14" y2="10.4" stroke="#eee" stroke-width="1"/>
 <line x1="6" y1="14.4" x2="14" y2="14.4" stroke="#eee" stroke-width="1"/>
 <circle cx="36" cy="10" r="9" fill="#555"/>
 <text x="36" y="15" text-anchor="middle" font-family="Liberation Sans" font-size="14" fill="#fff" stroke="#fff" stroke-width="0.3">?</text>
</svg>

<div class="t" style="left:603px;top:115px">Maximum number of iterations:</div>
<div class="fld" style="left:815px;top:112px;width:74px;height:21px"></div>
<div class="t" style="left:815px;top:115px;width:71px;text-align:right">100</div>
<div class="t" style="left:603px;top:140px">Number of images:</div>
<div class="fld" style="left:815px;top:137px;width:74px;height:21px"></div>
<div class="t" style="left:815px;top:140px;width:71px;text-align:right">19</div>

<div class="t" style="left:603px;top:190px">Initial system:</div>
<div class="fld" style="left:815px;top:187px;width:124px;height:28px"></div>
<div class="a" style="left:921px;top:189px;width:16px;height:24px;background:#f2f2f2;border-left:1px solid #8a8a8a"></div>
<svg class="a" style="left:925px;top:199px" width="9" height="6"><polygon points="0.5,0.5 8,0.5 4.25,5.5" fill="#333"/></svg>
<div class="t" style="left:827px;top:193px">initial</div>

<div class="t" style="left:603px;top:222px">Final system:</div>
<div class="fld" style="left:815px;top:219px;width:124px;height:28px"></div>
<div class="a" style="left:921px;top:221px;width:16px;height:24px;background:#f2f2f2;border-left:1px solid #8a8a8a"></div>
<svg class="a" style="left:925px;top:231px" width="9" height="6"><polygon points="0.5,0.5 8,0.5 4.25,5.5" fill="#333"/></svg>
<div class="t" style="left:827px;top:225px">final</div>

<div class="t" style="left:603px;top:254px">Optimize reactants/products:</div>
<div class="cb" style="left:816px;top:256px;background:#ffa000"></div>
<div class="t" style="left:831px;top:254px">Yes</div>

<div class="a" style="left:602px;top:281px;width:27px;height:19px;background:#efefef;border:1px solid #8c8c8c;border-radius:1px"></div>
<svg class="a" style="left:611px;top:286px" width="10" height="10"><line x1="5" y1="0.5" x2="5" y2="9.5" stroke="#444" stroke-width="1.6"/><line x1="0.5" y1="5" x2="9.5" y2="5" stroke="#444" stroke-width="1.6"/></svg>
<div class="t" style="left:636px;top:281px">Intermediates:</div>
<div class="a" style="left:736px;top:278px;width:124px;height:27px;background:#eeeeee;border-top:1px solid #8a8a8a;border-left:1px solid #8a8a8a;border-right:1px solid #f4f4f4;border-bottom:1px solid #f4f4f4"></div>
<div class="a" style="left:842px;top:280px;width:1px;height:24px;background:#8a8a8a"></div>
<svg class="a" style="left:846px;top:290px" width="9" height="6"><polygon points="0.5,0.5 8,0.5 4.25,5.5" fill="#333"/></svg>

<div class="t" style="left:603px;top:341px;letter-spacing:-0.27px">Climb highest image to TS:</div>
<div class="cb" style="left:816px;top:343px;background:#ffa000"></div>
<div class="t" style="left:831px;top:341px">Yes</div>
<div class="t" style="left:603px;top:366px">CI force threshold:</div>
<div class="a" style="left:815px;top:363px;width:74px;height:21px;background:#efefef;border-top:1px solid #8a8a8a;border-left:1px solid #8a8a8a;border-right:1px solid #f8f8f8;border-bottom:1px solid #f8f8f8"></div>
<div class="t" style="left:815px;top:366px;width:72px;text-align:right">0.0</div>
<div class="t" style="left:899px;top:366px;letter-spacing:-0.3px">Ha/Bohr</div>
<svg class="a" style="left:948px;top:372px" width="6" height="5"><polygon points="0.5,0.5 5,0.5 2.75,4" fill="#222"/></svg>

<div class="t" style="left:603px;top:416px;letter-spacing:-0.32px">Characterize PES point:</div>
<div class="cb" style="left:816px;top:418px;background:#fff"></div>
<div class="t" style="left:831px;top:416px">Yes</div>

<div class="t" style="left:603px;top:466px;letter-spacing:-0.2px">Convergence and optimization details</div>
<div class="t" style="left:603px;top:491px;letter-spacing:-0.35px">NEB details</div>
<svg class="a" style="left:1022px;top:463px" width="20" height="45">
 <circle cx="10" cy="10" r="9" fill="#555"/>
 <polyline points="8,5.5 12.5,10 8,14.5" fill="none" stroke="#fff" stroke-width="1.6"/>
 <circle cx="10" cy="35" r="9" fill="#555"/>
 <polyline points="8,30.5 12.5,35 8,39.5" fill="none" stroke="#fff" stroke-width="1.6"/>
</svg>

<div class="a" style="left:0;top:708px;width:593px;height:23px;background:#e6e6e6"></div>
<div class="t" style="left:523px;top:681px;font-size:11px;line-height:13px">Li17 S36 Ti18</div>
<div class="t" style="left:21px;top:712px;letter-spacing:-0.5px">Li18S36Ti18</div>
<svg class="a" style="left:96px;top:712px" width="14" height="15"><polygon points="1,7 12.5,1 12.5,13.5" fill="#000"/></svg>
<div class="a" style="left:118px;top:709px;width:280px;height:22px;background:#e6e6e6;border-top:1px solid #8a8a8a;border-left:1px solid #8a8a8a;border-right:1px solid #fff;border-bottom:1px solid #fff"></div>
<div class="t" style="left:245px;top:712px">final</div>
<svg class="a" style="left:405px;top:712px" width="14" height="15"><polygon points="1,1 12,7 1,13.5" fill="#a5a5a5"/></svg>
<svg class="a" style="left:518px;top:712px" width="70" height="15">
 <line x1="7" y1="1.5" x2="7" y2="12.5" stroke="#2a2a2a" stroke-width="1.3"/><line x1="2" y1="7.5" x2="12" y2="7.5" stroke="#2a2a2a" stroke-width="1.1"/>
 <line x1="28" y1="7.5" x2="38" y2="7.5" stroke="#2a2a2a" stroke-width="1.1"/>
 <polygon points="52.5,2 65.5,2 59,13" fill="#000"/>
</svg>

<div class="a" style="left:0;top:731px;width:593px;height:51px;background:linear-gradient(to bottom,#837676 0px,#8f8585 6px,#a8a2a2 14px,#c2bfbf 24px,#d2d1d1 34px,#d9d9d9 51px)"></div>
<svg class="a" style="left:60px;top:731px" width="475" height="51">
 <defs>
  <radialGradient id="glow" cx="0.5" cy="0.5" r="0.5"><stop offset="0" stop-color="#fff" stop-opacity="0.7"/><stop offset="0.45" stop-color="#fff" stop-opacity="0.3"/><stop offset="1" stop-color="#fff" stop-opacity="0"/></radialGradient>
  <linearGradient id="rf" x1="0" y1="0" x2="0" y2="1"><stop offset="0" stop-color="#fff" stop-opacity="0.55"/><stop offset="0.5" stop-color="#fff" stop-opacity="0.15"/><stop offset="1" stop-color="#fff" stop-opacity="0"/></linearGradient>
  <clipPath id="pc"><rect x="15" y="9.5" width="442" height="29.5" rx="14.7" ry="14.7"/></clipPath>
 </defs>
 <rect x="14" y="42.5" width="444" height="32" rx="16" fill="#9a9494" fill-opacity="0.6" stroke="url(#rf)" stroke-width="1.6"/>
 <rect x="22" y="40.5" width="428" height="3" fill="#6a6262" fill-opacity="0.35"/>
 <rect x="13" y="7.5" width="446" height="33.5" rx="16.7" fill="#ffffff"/>
 <rect x="12.5" y="7" width="447" height="34.5" rx="17.2" fill="none" stroke="#3a3030" stroke-opacity="0.25" stroke-width="1"/>
 <g clip-path="url(#pc)">
  <rect x="15" y="9.5" width="442" height="29.5" fill="#2a0808"/>
  <path d="M15,9 H458 V19.5 Q452,24.4 440,24.7 H34 Q22,24.4 15,19.5 Z" fill="#605151"/>
 </g>
 <circle cx="36" cy="25" r="12" fill="url(#glow)"/>
 <polygon points="33,17.8 43,26.3 41,28 36.3,25.3 35.9,31 33.1,31" fill="#f2eeee"/>
</svg>
<div class="a" style="left:60px;top:731px;width:475px;height:51px;font-family:'Liberation Sans',sans-serif;font-size:16px;line-height:20px;color:#ddd5d5;-webkit-text-stroke:0.45px #ddd5d5">
 <span class="a" style="left:60.6px;top:16px;transform:scaleX(1.14);transform-origin:0 0">C</span>
 <span class="a" style="left:92.8px;top:16px;transform:scaleX(1.1);transform-origin:0 0">O</span>
 <span class="a" style="left:125px;top:16px;transform:scaleX(1.17);transform-origin:0 0">N</span>
 <span class="a" style="left:157.3px;top:16px;transform:scaleX(1.2);transform-origin:0 0">H</span>
 <span class="a" style="left:187px;top:16px;transform:scaleX(1.12);transform-origin:0 0">X</span>
</div>
<svg class="a" style="left:60px;top:731px" width="475" height="51">
 <polygon points="200.5,25.8 206.3,25.8 203.4,30.6" fill="#ddd5d5"/>
 <polygon points="228,17.2 234.2,20.8 234.2,27.9 228,31.5 221.8,27.9 221.8,20.8" fill="none" stroke="#ddd5d5" stroke-width="2.6"/>
 <g stroke="#ddd5d5" stroke-width="1.9" fill="none" transform="translate(259.8,24.6)">
  <line x1="0" y1="-8" x2="0" y2="8"/><line x1="-6.9" y1="-4" x2="6.9" y2="4"/><line x1="-6.9" y1="4" x2="6.9" y2="-4"/>
  <polyline points="-2.5,-7.5 0,-5 2.5,-7.5"/><polyline points="-2.5,7.5 0,5 2.5,7.5"/>
  <polyline points="-7.7,-1.6 -4.3,-2.5 -5.2,-5.9"/>
  <polyline points="7.7,1.6 4.3,2.5 5.2,5.9"/>
  <polyline points="-7.7,1.6 -4.3,2.5 -5.2,5.9"/>
  <polyline points="7.7,-1.6 4.3,-2.5 5.2,-5.9"/>
 </g>
 <polygon points="285,21.5 298.5,17.5 298.5,26.5 285,30.5" fill="none" stroke="#ddd5d5" stroke-width="2"/>
 <polygon points="371.5,16 373.6,22.1 380,22.2 374.9,26.1 376.7,31.8 371.5,28.3 366.3,31.8 368.1,26.1 363,22.2 369.4,22.1" fill="#ddd5d5"/>
 <g stroke="#ddd5d5" fill="none" stroke-width="1.3">
  <rect x="395.8" y="15.5" width="16.4" height="16.4"/>
  <rect x="400.5" y="20.2" width="7" height="7"/>
  <line x1="395.8" y1="15.5" x2="400.5" y2="20.2"/><line x1="412.2" y1="15.5" x2="407.5" y2="20.2"/>
  <line x1="395.8" y1="31.9" x2="400.5" y2="27.2"/><line x1="412.2" y1="31.9" x2="407.5" y2="27.2"/>
 </g>
 <circle cx="430.1" cy="19.5" r="3.2" fill="#ddd5d5"/>
 <circle cx="439.4" cy="19.5" r="2.7" fill="none" stroke="#ddd5d5" stroke-width="1"/>
 <circle cx="430.1" cy="28.8" r="3.2" fill="#ddd5d5"/>
 <circle cx="439.4" cy="28.8" r="3.2" fill="#ddd5d5"/>
</svg>
</body></html>
